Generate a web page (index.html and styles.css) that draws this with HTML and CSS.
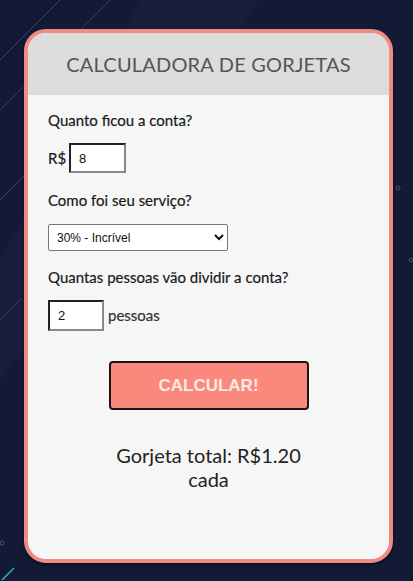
FILE: index.html
```html
<!DOCTYPE html>
<html lang="pt-BR">
<head>
<meta charset="utf-8">
<title>Calculadora de Gorjetas</title>
<link rel="stylesheet" href="styles.css">
</head>
<body>
<svg class="bg-deco" width="413" height="581" viewBox="0 0 413 581" aria-hidden="true">
  <polygon points="140,0 260,0 180,120 40,330 0,380 0,260" fill="#1b2140" opacity="0.6"/>
  <line x1="0" y1="60" x2="60" y2="0" stroke="#3a4266" stroke-width="1"/>
  <line x1="0" y1="110" x2="110" y2="0" stroke="#2f3759" stroke-width="1"/>
  <line x1="0" y1="200" x2="30" y2="170" stroke="#3a4266" stroke-width="1"/>
  <line x1="0" y1="320" x2="22" y2="298" stroke="#3a4266" stroke-width="1"/>
  <line x1="2" y1="580" x2="14" y2="568" stroke="#2fb6c0" stroke-width="1.5"/>
  <circle cx="398" cy="188" r="2" fill="none" stroke="#4a5275" stroke-width="1"/>
  <circle cx="411" cy="260" r="2" fill="none" stroke="#4a5275" stroke-width="1"/>
  <circle cx="2" cy="543" r="2" fill="none" stroke="#4a5275" stroke-width="1"/>
</svg>
<main class="card">
  <header class="card-header">
    <h1 class="title">CALCULADORA DE GORJETAS</h1>
  </header>
  <section class="card-body">
    <p class="label">Quanto ficou a conta?</p>
    <div class="row">
      <span class="prefix">R$</span>
      <input class="num-input" type="text" value="8">
    </div>
    <p class="label label-gap">Como foi seu serviço?</p>
    <select class="service">
      <option>30% - Incrível</option>
    </select>
    <p class="label label-gap2">Quantas pessoas vão dividir a conta?</p>
    <div class="row">
      <input class="num-input people" type="text" value="2">
      <span class="suffix">pessoas</span>
    </div>
    <div class="btn-wrap">
      <button class="calc-btn">CALCULAR!</button>
    </div>
    <div class="result">
      <p class="result-line">Gorjeta total: R$1.20</p>
      <p class="result-line">cada</p>
    </div>
  </section>
</main>
</body>
</html>
```
FILE: styles.css
```css
* { box-sizing: border-box; }

html, body {
  margin: 0;
  padding: 0;
}

body {
  width: 413px;
  height: 581px;
  overflow: hidden;
  background: #131a36;
  font-family: Lato, "Noto Sans", sans-serif;
  position: relative;
  padding: 29px 20px 0 24px;
}

.bg-deco {
  position: absolute;
  left: 0;
  top: 0;
}

.card {
  position: relative;
  width: 369px;
  height: 534px;
  border: 4px solid #f08b82;
  border-radius: 22px;
  background: #f6f6f6;
  overflow: hidden;
  box-shadow: 0 2px 3px rgba(0,0,0,0.5);
}

.card-header {
  height: 62px;
  background: #dcdcdc;
  display: flex;
  align-items: center;
  justify-content: center;
}

.title {
  margin: 0;
  font-weight: 400;
  font-size: 20px;
  color: #555;
  letter-spacing: 0.2px;
}

.card-body {
  padding: 15px 20px 0 20px;
}

.label {
  margin: 0;
  font-size: 15px;
  line-height: 20px;
  color: #1a1a1a;
  -webkit-text-stroke: 0.2px #1a1a1a;
}

.label-gap { margin-top: 17px; }
.label-gap2 { margin-top: 16px; }

.row {
  display: flex;
  align-items: center;
  margin-top: 13px;
  height: 30px;
}

.prefix {
  font-size: 15px;
  color: #1a1a1a;
  -webkit-text-stroke: 0.2px #1a1a1a;
  margin-right: 3px;
}

.suffix {
  font-size: 15px;
  color: #333;
  -webkit-text-stroke: 0.2px #333;
  margin-left: 4px;
}

.num-input {
  width: 57px;
  height: 30px;
  border: 2px solid #333;
  border-color: #222 #888 #888 #222;
  background: #fff;
  font-family: "Liberation Sans", Arial, sans-serif;
  font-size: 13px;
  padding: 0 0 0 8px;
  color: #111;
}

.num-input.people {
  width: 56px;
  height: 31px;
}

.service {
  display: block;
  margin-top: 14px;
  width: 180px;
  height: 27px;
  border: 1px solid #777;
  border-radius: 2px;
  background: #fff;
  font-family: "Liberation Sans", Arial, sans-serif;
  font-size: 12px;
  color: #111;
  padding: 0 4px;
}

.btn-wrap {
  display: flex;
  justify-content: center;
  margin-top: 31px;
}

.calc-btn {
  width: 200px;
  height: 49px;
  background: #fa887c;
  border: 2px solid #1f1414;
  border-radius: 4px;
  color: #fbe9e4;
  font-family: "Liberation Sans", Arial, sans-serif;
  font-weight: 700;
  font-size: 17px;
}

.result {
  margin-top: 33px;
  text-align: center;
}

.result-line {
  margin: 0;
  font-size: 20px;
  line-height: 24px;
  color: #222;
}
```
